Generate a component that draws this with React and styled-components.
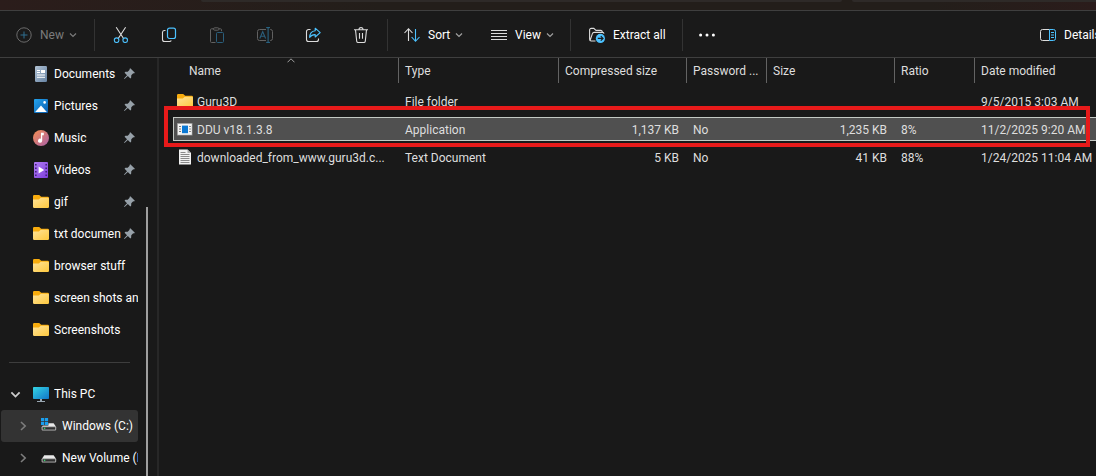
import React from "react";
import styled, { createGlobalStyle } from "styled-components";

const GlobalStyle = createGlobalStyle`
    * {
        box-sizing: border-box;
    }
    body {
        margin: 0;
        background-color: #191919;
        color: #fff;
        font-family: Roboto, "Open Sans", sans-serif;
        font-size: 12px;
        line-height: 16px;
    }
    button {
        font: inherit;
        color: inherit;
        background: none;
        border: 0;
        padding: 0;
    }
    svg {
        display: block;
        flex: none;
    }
`;

const Explorer = styled.div`
    display: flex;
    flex-direction: column;
    min-height: 100vh;
    overflow: hidden;
`;
const AddressStrip = styled.div`
    display: flex;
    gap: 10px;
    height: 10px;
    padding-left: 201px;
    background: linear-gradient(90deg, #2b1d1b, #231e1a 35%, #231e1a 85%, #2b1c1b);
`;
const AddressField = styled.div`
    flex: ${(props) => (props.$search ? "0 0 244px" : "1")};
    height: 2px;
    background-color: #2e2a28;
    border-radius: ${(props) => (props.$search ? "0 0 0 2px" : "0 0 2px 2px")};
`;
const CommandBar = styled.div`
    display: flex;
    align-items: center;
    height: 48px;
    padding-top: 2px;
    border-top: 1px solid #3f3f3f;
    border-bottom: 1px solid #3f3f3f;
    background-color: #1a1a1a;
`;
const CommandButton = styled.button`
    display: flex;
    flex: none;
    align-items: center;
    gap: 8px;
    width: ${(props) => props.$width}px;
    height: 32px;
    padding-left: ${(props) => (props.$roomy ? 16 : 14)}px;
    overflow: hidden;
    white-space: nowrap;
    color: ${(props) => (props.disabled ? "#7b7b7b" : "#fff")};
    svg + svg {
        margin-left: -3px;
    }
`;
const IconButton = styled.button`
    display: flex;
    flex: none;
    align-items: center;
    justify-content: center;
    width: ${(props) => (props.$narrow ? 44 : 48)}px;
    height: 32px;
`;
const BarDivider = styled.div`
    flex: none;
    width: 1px;
    height: 32px;
    margin: 0 2px;
    background-color: #333;
`;
const Spacer = styled.div`
    flex: 1;
`;
const Body = styled.div`
    display: flex;
    flex: 1;
`;
const Sidebar = styled.nav`
    display: flex;
    flex: none;
    width: 159px;
    border-right: 2px solid #272727;
`;
const TreeList = styled.ul`
    width: 138px;
    margin: 0;
    padding: 0;
    list-style: none;
`;
const TreeLink = styled.a`
    display: flex;
    align-items: center;
    height: 32px;
    margin-left: 1px;
    padding-left: ${(props) => (props.$child ? 13 : 5)}px;
    border-radius: 3px;
    color: #fff;
    text-decoration: none;
    background-color: ${(props) => (props.$selected ? "#333" : "transparent")};
`;
const ChevronSlot = styled.span`
    display: flex;
    justify-content: center;
    flex: none;
    width: 18px;
    margin-right: 9px;
    color: ${(props) => (props.$open ? "#ccc" : "#7d7d7d")};
`;
const TreeLabel = styled.span`
    flex: 1;
    margin-left: 5px;
    overflow: hidden;
    white-space: nowrap;
`;
const PinSlot = styled.span`
    margin: 0 3px 2px 1px;
`;
const TreeDivider = styled.li`
    height: 32px;
    padding: 16px 8px 0 9px;
    &::before {
        content: "";
        display: block;
        height: 1px;
        background-color: #3d3d3d;
    }
`;
const ScrollThumb = styled.div`
    width: 2px;
    margin: 149px 0 0 8px;
    background-color: #9f9f9f;
`;
const Files = styled.main`
    flex: 1;
    min-width: 0;
    padding-left: 14px;
`;
const FileTable = styled.table`
    display: block;
    color: #dedede;
    thead,
    tbody {
        display: block;
    }
`;
const columns = "226px 160px 128px 80px 128px 80px 1fr";
const HeadRow = styled.tr`
    display: grid;
    grid-template-columns: ${columns};
    height: 25px;
    margin-bottom: 6px;
`;
const HeadCell = styled.th`
    position: relative;
    margin-left: ${(props) => (props.$sorted ? 10 : 0)}px;
    padding: 0;
    border-right: 1px solid #636363;
    font-weight: 400;
    &:last-child {
        border-right: 0;
    }
`;
const HeadButton = styled.button`
    width: 100%;
    height: 100%;
    padding: 1px 0 0 6px;
    text-align: left;
    white-space: nowrap;
`;
const SortMark = styled.span`
    position: absolute;
    top: 0;
    left: 50%;
    transform: translateX(-50%);
    color: #a0a0a0;
`;
const FileRow = styled.tr`
    position: relative;
    display: grid;
    grid-template-columns: ${columns};
    align-items: center;
    height: 24px;
    margin-bottom: 4px;
    background-color: ${(props) => (props.$selected ? "#505050" : "transparent")};
    box-shadow: ${(props) =>
        props.$selected
            ? "inset 1px 0 #c4c9c4, inset 0 1px #c4c9c4, inset 0 -1px #c4c9c4"
            : "none"};
`;
const FileCell = styled.td`
    padding: 2px 8px 0 6px;
    text-align: ${(props) => (props.$number ? "right" : "left")};
    white-space: nowrap;
`;
const NameCell = styled.td`
    display: flex;
    align-items: center;
    gap: 4px;
    min-width: 0;
    padding: 0 2px 0 4px;
    span {
        padding-top: 2px;
        white-space: nowrap;
    }
`;
const Highlight = styled.div`
    position: absolute;
    top: -11px;
    right: 6px;
    bottom: -6px;
    left: -9px;
    border: 4px solid #e81a1a;
    pointer-events: none;
`;

const Icon = ({ children, size = 16 }) => (
    <svg width={size} height={size} viewBox="0 0 16 16" fill="none" aria-hidden="true">
        {children}
    </svg>
);
const blue = "#4cc2ff";
const light = "#dcdcdc";

const ChevronDown = ({ size = 8, color = "currentColor", width = 1.2 }) => (
    <svg width={size} height={size} viewBox="0 0 8 8" fill="none" aria-hidden="true">
        <path d="M1 2.5 4 5.5 7 2.5" stroke={color} strokeWidth={width} />
    </svg>
);
const ChevronRight = () => (
    <svg width="10" height="10" viewBox="0 0 10 10" fill="none" aria-hidden="true">
        <path d="M3 1 7.2 5 3 9" stroke="currentColor" strokeWidth="1.6" />
    </svg>
);
const NewIcon = () => (
    <Icon>
        <circle cx="8" cy="8" r="7.2" stroke="#6b6b6b" />
        <path d="M8 4.5v7M4.5 8h7" stroke="#2f6e90" />
    </Icon>
);
const CutIcon = () => (
    <Icon>
        <path d="M3.2.3 10.4 11.2M12.6.3 5.4 11.2" stroke={light} strokeWidth="1.1" />
        <circle cx="3.6" cy="13.2" r="2.3" stroke={blue} strokeWidth="1.1" />
        <circle cx="12.2" cy="13.2" r="2.3" stroke={blue} strokeWidth="1.1" />
    </Icon>
);
const CopyIcon = () => (
    <Icon>
        <path
            d="M4.5 3.5H3.5a2 2 0 0 0-2 1.8v7.2a2 2 0 0 0 2 2h5a2 2 0 0 0 1.8-1"
            stroke={light}
            strokeWidth="1.1"
        />
        <rect x="6.5" y="1.2" width="8" height="10.3" rx="2" stroke={blue} strokeWidth="1.2" />
    </Icon>
);
const PasteIcon = () => (
    <Icon>
        <path
            d="M4.5 1.8h-2a1 1 0 0 0-1 1v11.7a1 1 0 0 0 1 1h4M10 1.8h1.5a1 1 0 0 1 1 1v1.4"
            stroke="#616161"
        />
        <rect x="4.5" y=".8" width="5.5" height="2.4" rx="1.2" stroke="#616161" />
        <rect x="7.5" y="5.5" width="7" height="10" rx="1" stroke="#2b5f7c" />
    </Icon>
);
const RenameIcon = () => (
    <Icon>
        <path
            d="M9 2.5H2.5a2 2 0 0 0-2 2v7a2 2 0 0 0 2 2H9M13 2.5h.5a2 2 0 0 1 2 2v7a2 2 0 0 1-2 2H13"
            stroke="#616161"
        />
        <path d="M2.8 11.5 5.7 4.6l2.9 6.9M3.8 9.2h3.8" stroke="#2b5f7c" strokeWidth="1.1" />
        <path d="M9.2.6H13M9.2 15.4H13M11.1.6v14.8" stroke="#2b6a8c" />
    </Icon>
);
const ShareIcon = () => (
    <Icon>
        <path
            d="M5.5 2.5h-2a2 2 0 0 0-2 2v8a2 2 0 0 0 2 2h8a2 2 0 0 0 2-2v-1"
            stroke={light}
            strokeWidth="1.1"
        />
        <path
            d="M10.2 1.2 15.2 5.6l-5 4.4V7.6C7.6 7.5 5.9 8.4 4.6 10.4 4.8 6.3 6.8 4 10.2 3.7Z"
            stroke={blue}
            strokeWidth="1.1"
            strokeLinejoin="round"
        />
    </Icon>
);
const DeleteIcon = () => (
    <Icon>
        <path
            d="M1 2.8h14M6 2.6a2 2 0 0 1 4 0M2.5 2.8l1.2 11.4a1.5 1.5 0 0 0 1.5 1.3h5.6a1.5 1.5 0 0 0 1.5-1.3l1.2-11.4M6.5 6v5.8M9.5 6v5.8"
            stroke={light}
            strokeWidth="1.1"
        />
    </Icon>
);
const SortIcon = () => (
    <Icon>
        <path d="M4.5 14V2M.5 6l4-4.3L8.5 6" stroke={light} strokeWidth="1.1" />
        <path d="M11.5 2v12M7.6 10l3.9 4.3 4-4.3" stroke={blue} strokeWidth="1.1" />
    </Icon>
);
const ViewIcon = () => (
    <Icon>
        <path d="M0 3.5h16M0 6.5h16M0 9.5h16M0 12.5h16" stroke={light} />
    </Icon>
);
const ExtractIcon = () => (
    <Icon>
        <path
            d="M6.5 14H2.2A1.7 1.7 0 0 1 .6 12.3V3A1.6 1.6 0 0 1 2.2 1.4h2.6L7 3.4h4.8a1.5 1.5 0 0 1 1.5 1.6M1.2 13.2 3.4 6.6A1.8 1.8 0 0 1 5 5.4h8.6a1.5 1.5 0 0 1 1.4 1.2"
            stroke={light}
            strokeWidth="1.1"
        />
        <circle cx="11.4" cy="11.4" r="4.6" fill={blue} />
        <path d="M8.8 11.4h5M11.8 9.2l2.2 2.2-2.2 2.2" stroke="#1a1a1a" strokeWidth="1.2" />
    </Icon>
);
const MoreIcon = () => (
    <Icon>
        <circle cx="1.6" cy="8" r="1.5" fill="#fff" />
        <circle cx="8" cy="8" r="1.5" fill="#fff" />
        <circle cx="14.4" cy="8" r="1.5" fill="#fff" />
    </Icon>
);
const DetailsIcon = () => (
    <Icon>
        <path d="M9.5 2.5h-7a2 2 0 0 0-2 2v7a2 2 0 0 0 2 2h7" stroke={light} />
        <path
            d="M9.5 2.5h4a2 2 0 0 1 2 2v7a2 2 0 0 1-2 2h-4ZM11 5.5h3M11 8h3M11 10.5h3"
            stroke={blue}
        />
    </Icon>
);

const DocumentsIcon = () => (
    <Icon>
        <defs>
            <linearGradient id="docs" x1="0" y1="0" x2="1" y2="1">
                <stop stopColor="#b3c4d6" />
                <stop offset="1" stopColor="#6683a3" />
            </linearGradient>
        </defs>
        <rect x="2" width="12" height="16" rx="1.2" fill="url(#docs)" />
        <path d="M4 4.5h3M4 6.5h3M4 9h8M4 11.3h8" stroke="#fff" />
        <rect x="8" y="4" width="4" height="3" fill="#fff" />
    </Icon>
);
const PicturesIcon = () => (
    <Icon>
        <defs>
            <linearGradient id="pics" x1="0" y1="0" x2="1" y2="1">
                <stop stopColor="#24a4ee" />
                <stop offset="1" stopColor="#0a5db0" />
            </linearGradient>
        </defs>
        <rect x="1" y="1" width="14" height="14" rx="1" fill="url(#pics)" />
        <path d="M2.2 14 8 7.6l5.8 6.4Z" fill="#fff" />
        <circle cx="11.6" cy="4.4" r="1.3" fill="#fff" />
    </Icon>
);
const MusicIcon = () => (
    <Icon>
        <defs>
            <linearGradient id="music" x1="0" y1="0" x2="1" y2="1">
                <stop stopColor="#f78f51" />
                <stop offset="1" stopColor="#a85fa8" />
            </linearGradient>
        </defs>
        <circle cx="8" cy="8" r="8" fill="url(#music)" />
        <path d="M8 2.8h2.8v2.4H9.2v5.6a2.1 2.1 0 1 1-1.3-2Z" fill="#fff" />
    </Icon>
);
const VideosIcon = () => (
    <Icon>
        <defs>
            <linearGradient id="vids" x1="0" y1="0" x2="1" y2="1">
                <stop stopColor="#b17cf3" />
                <stop offset="1" stopColor="#7c3ddb" />
            </linearGradient>
        </defs>
        <rect x="1" width="14" height="16" rx="1" fill="url(#vids)" />
        <path d="M5.6 4.4v7.2L11.2 8Z" fill="#fff" />
        <path
            d="M2 2h1.6v1.6H2ZM2 5.4h1.6V7H2ZM2 9h1.6v1.6H2ZM2 12.4h1.6V14H2ZM12.4 2H14v1.6h-1.6ZM12.4 5.4H14V7h-1.6ZM12.4 9H14v1.6h-1.6ZM12.4 12.4H14V14h-1.6Z"
            fill="#42207a"
        />
    </Icon>
);
const FolderIcon = () => (
    <Icon>
        <defs>
            <linearGradient id="folder" x1="0" y1="0" x2="1" y2="1">
                <stop stopColor="#ffe39a" />
                <stop offset="1" stopColor="#fec83d" />
            </linearGradient>
        </defs>
        <path d="M0 2.2A1.2 1.2 0 0 1 1.2 1h5l2 1.8h6.6A1.2 1.2 0 0 1 16 4V7H0Z" fill="#f8ac0d" />
        <path
            d="M0 5.4h5.8l2-1.6h7A1.2 1.2 0 0 1 16 5v7.8A1.2 1.2 0 0 1 14.8 14H1.2A1.2 1.2 0 0 1 0 12.8Z"
            fill="url(#folder)"
        />
    </Icon>
);
const MonitorIcon = () => (
    <Icon>
        <defs>
            <linearGradient id="screen" x1="0" y1="0" x2="1" y2="1">
                <stop stopColor="#34d5e4" />
                <stop offset="1" stopColor="#1175c8" />
            </linearGradient>
        </defs>
        <rect y="1" width="16" height="12" rx=".8" fill="url(#screen)" />
        <path d="M7 13h2v2h3v1H4v-1h3Z" fill="#9aa7b2" />
    </Icon>
);
const DriveIcon = ({ system }) => (
    <Icon>
        <path d="M3.2 5.2h9.4L15 8.8H1Z" fill="#e8e8e8" />
        <rect x=".6" y="8.4" width="14.6" height="4" rx=".8" fill="#b5b5b5" />
        <rect x="1.6" y="9.2" width="12.6" height="2.4" fill="#303030" />
        <circle cx="3.6" cy="10.4" r=".8" fill="#35d06a" />
        {system && (
            <>
                <rect width="7.4" height="7.6" fill="#333" />
                <path d="M0 0h3.2v3.2H0ZM3.9 0h3.2v3.2H3.9ZM0 3.9h3.2v3.2H0ZM3.9 3.9h3.2v3.2H3.9Z" fill="#1a9fee" />
            </>
        )}
    </Icon>
);
const PinIcon = () => (
    <Icon size={11}>
        <path
            d="M9.2.2 15.8 6.8 14.6 8 13.4 7.8 10.6 10.6 10.4 14 9.2 15.2 5.6 11.6.8 16 0 15.2 4.4 10.4.8 6.8 2 5.6 5.4 5.4 8.2 2.6 8 1.4Z"
            fill="#97a1a9"
        />
    </Icon>
);
const AppIcon = () => (
    <Icon>
        <rect y="2" width="15.5" height="12.5" fill="#8d8d8d" />
        <rect x=".8" y="2.8" width="14" height="11" fill="#f4f4f4" />
        <rect x="5" y="4.6" width="6" height="7.6" fill="#0a78d4" />
        <path d="M2 5.5h2M2 8h2M2 10.5h2M12.2 5.5h1.6M12.2 8h1.6M12.2 10.5h1.6" stroke="#777" />
    </Icon>
);
const TextFileIcon = () => (
    <Icon>
        <path d="M2 .5h8.5L14 4v11.5H2Z" fill="#f2f2f2" />
        <path d="M10.5.5V4H14Z" fill="#a8a8a8" />
        <path d="M3.5 3.5h5M3.5 5.5h9M3.5 7.5h9M3.5 9.5h9M3.5 11.5h9M3.5 13.5h9" stroke="#8a8a8a" />
    </Icon>
);

const places = [
    { name: "Documents", icon: DocumentsIcon, pinned: true },
    { name: "Pictures", icon: PicturesIcon, pinned: true },
    { name: "Music", icon: MusicIcon, pinned: true },
    { name: "Videos", icon: VideosIcon, pinned: true },
    { name: "gif", icon: FolderIcon, pinned: true },
    { name: "txt documen", icon: FolderIcon, pinned: true },
    { name: "browser stuff", icon: FolderIcon },
    { name: "screen shots and", icon: FolderIcon },
    { name: "Screenshots", icon: FolderIcon },
];
const files = [
    { name: "Guru3D", icon: FolderIcon, type: "File folder", date: "9/5/2015 3:03 AM" },
    {
        name: "DDU v18.1.3.8",
        icon: AppIcon,
        type: "Application",
        packed: "1,137 KB",
        password: "No",
        size: "1,235 KB",
        ratio: "8%",
        date: "11/2/2025 9:20 AM",
        selected: true,
    },
    {
        name: "downloaded_from_www.guru3d.c...",
        icon: TextFileIcon,
        type: "Text Document",
        packed: "5 KB",
        password: "No",
        size: "41 KB",
        ratio: "88%",
        date: "1/24/2025 11:04 AM",
    },
];
const headings = ["Name", "Type", "Compressed size", "Password ...", "Size", "Ratio", "Date modified"];

const TreeItem = ({ name, icon: ItemIcon, pinned, child, selected, open, system }) => (
    <li>
        <TreeLink href="#" $child={child} $selected={selected}>
            <ChevronSlot $open={open}>
                {open && <ChevronDown size={11} width={1.3} />}
                {child && <ChevronRight />}
            </ChevronSlot>
            <ItemIcon system={system} />
            <TreeLabel>{name}</TreeLabel>
            {pinned && (
                <PinSlot>
                    <PinIcon />
                </PinSlot>
            )}
        </TreeLink>
    </li>
);

export default function App() {
    return (
        <Explorer>
            <GlobalStyle />
            <AddressStrip>
                <AddressField />
                <AddressField $search />
            </AddressStrip>
            <CommandBar>
                <CommandButton $width={92} $roomy disabled>
                    <NewIcon />
                    New
                    <ChevronDown color="#7b7b7b" />
                </CommandButton>
                <BarDivider />
                <IconButton aria-label="Cut">
                    <CutIcon />
                </IconButton>
                <IconButton aria-label="Copy">
                    <CopyIcon />
                </IconButton>
                <IconButton aria-label="Paste" disabled>
                    <PasteIcon />
                </IconButton>
                <IconButton aria-label="Rename" disabled>
                    <RenameIcon />
                </IconButton>
                <IconButton aria-label="Share">
                    <ShareIcon />
                </IconButton>
                <IconButton aria-label="Delete">
                    <DeleteIcon />
                </IconButton>
                <BarDivider />
                <CommandButton $width={87}>
                    <SortIcon />
                    Sort
                    <ChevronDown color="#a0a0a0" />
                </CommandButton>
                <CommandButton $width={91}>
                    <ViewIcon />
                    View
                    <ChevronDown color="#a0a0a0" />
                </CommandButton>
                <BarDivider />
                <CommandButton $width={107} $roomy>
                    <ExtractIcon />
                    Extract all
                </CommandButton>
                <BarDivider />
                <IconButton $narrow aria-label="See more">
                    <MoreIcon />
                </IconButton>
                <Spacer />
                <CommandButton $width={70}>
                    <DetailsIcon />
                    Details
                </CommandButton>
            </CommandBar>
            <Body>
                <Sidebar>
                    <TreeList>
                        {places.map((place) => (
                            <TreeItem key={place.name} {...place} />
                        ))}
                        <TreeDivider />
                        <TreeItem name="This PC" icon={MonitorIcon} open />
                        <TreeItem name="Windows (C:)" icon={DriveIcon} child selected system />
                        <TreeItem name="New Volume (D:)" icon={DriveIcon} child />
                    </TreeList>
                    <ScrollThumb />
                </Sidebar>
                <Files>
                    <FileTable>
                        <thead>
                            <HeadRow>
                                {headings.map((heading) => (
                                    <HeadCell key={heading} $sorted={heading === "Name"}>
                                        <HeadButton>{heading}</HeadButton>
                                        {heading === "Name" && (
                                            <SortMark>
                                                <svg width="8" height="5" viewBox="0 0 8 5" fill="none">
                                                    <path d="M.5 4.3 4 .8l3.5 3.5" stroke="currentColor" />
                                                </svg>
                                            </SortMark>
                                        )}
                                    </HeadCell>
                                ))}
                            </HeadRow>
                        </thead>
                        <tbody>
                            {files.map(({ icon: RowIcon, ...file }) => (
                                <FileRow key={file.name} $selected={file.selected}>
                                    <NameCell>
                                        <RowIcon />
                                        <span>{file.name}</span>
                                    </NameCell>
                                    <FileCell>{file.type}</FileCell>
                                    <FileCell $number>{file.packed}</FileCell>
                                    <FileCell>{file.password}</FileCell>
                                    <FileCell $number>{file.size}</FileCell>
                                    <FileCell>{file.ratio}</FileCell>
                                    <FileCell>
                                        {file.date}
                                        {file.selected && <Highlight />}
                                    </FileCell>
                                </FileRow>
                            ))}
                        </tbody>
                    </FileTable>
                </Files>
            </Body>
        </Explorer>
    );
}
